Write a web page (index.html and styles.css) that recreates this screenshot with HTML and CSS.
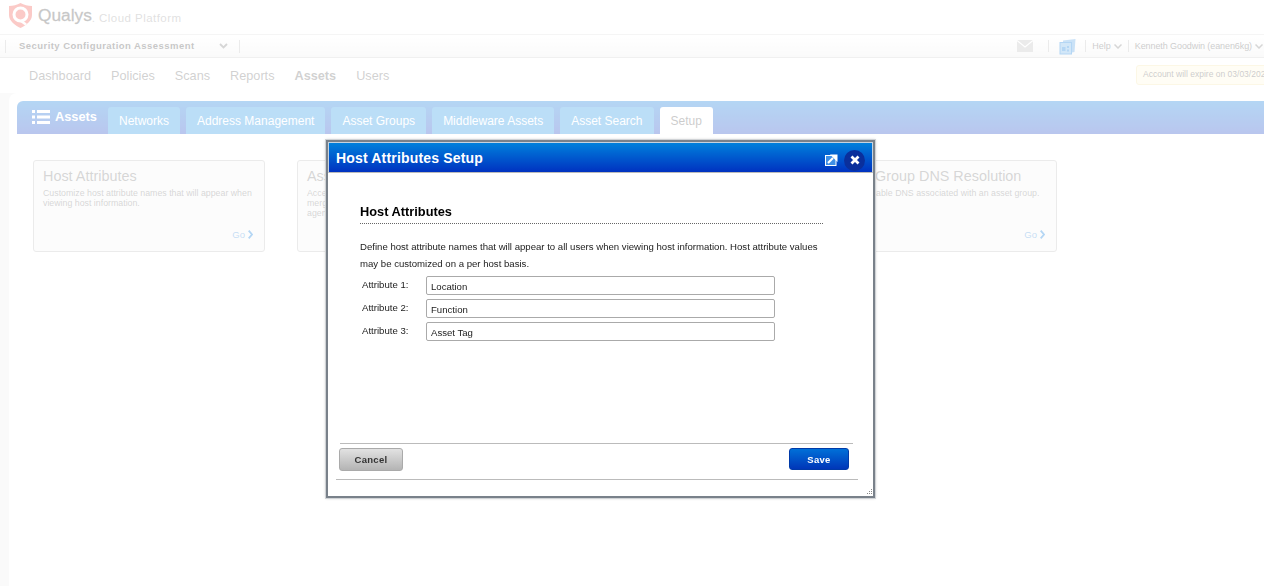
FILE: index.html
```html
<!DOCTYPE html>
<html>
<head>
	<title>Host Attributes Setup</title>
	<link rel="stylesheet" href="styles.css">
</head>
<body>
	<div class="page">
		<div class="logo-bar">
			<svg class="logo-mark" width="23" height="25" viewBox="0 0 23 25">
				<path d="M11.500 0 C15 2 19 3 23 3 V12 C23 18 17 22.500 11.500 25 C6 22.500 0 18 0 12 V3 C4 3 8 2 11.500 0 Z" fill="#f04e45"/>
				<circle cx="11.500" cy="11.500" r="6.500" fill="none" stroke="#fff" stroke-width="3"/>
				<path d="M12 18 L17 21.500" stroke="#fff" stroke-width="2.500"/>
			</svg>
			<span class="logo-name">Qualys</span>
			<span class="logo-sub">. Cloud Platform</span>
		</div>

		<div class="module-bar">
			<div class="module-select">
				<span>Security Configuration Assessment</span>
				<svg width="9" height="6" viewBox="0 0 9 6"><path d="M1 1 L4.500 4.500 L8 1" fill="none" stroke="#777" stroke-width="1.800"/></svg>
			</div>
			<div class="user-tools">
				<svg class="tool-mail" width="16" height="12" viewBox="0 0 16 12">
					<rect width="16" height="12" fill="#bbb"/>
					<path d="M0 0.500 L8 7 L16 0.500" fill="none" stroke="#fff" stroke-width="1.200"/>
				</svg>
				<div class="tool-stack">
					<svg width="17" height="17" viewBox="0 0 17 17">
						<path d="M4 2.500 L16.500 1 L15.500 14 L13 14.500 V4 L4 4 Z" fill="#0576da" opacity="0.700"/>
						<rect x="1" y="4.500" width="11.500" height="11.500" fill="#6aaee8" stroke="#0576da"/>
						<rect x="3" y="9" width="3.500" height="4" fill="#0576da"/>
						<rect x="8" y="8" width="2" height="2" fill="#0576da"/>
						<rect x="8" y="11.500" width="2" height="2" fill="#0576da"/>
					</svg>
				</div>
				<div class="tool-link tool-help">
					<span>Help</span>
					<svg width="8" height="5" viewBox="0 0 8 5"><path d="M0.500 0.500 L4 4 L7.500 0.500" fill="none" stroke="#777" stroke-width="1.500"/></svg>
				</div>
				<div class="tool-link tool-user">
					<span>Kenneth Goodwin (eanen6kg)</span>
					<svg width="8" height="5" viewBox="0 0 8 5"><path d="M0.500 0.500 L4 4 L7.500 0.500" fill="none" stroke="#777" stroke-width="1.500"/></svg>
				</div>
			</div>
		</div>

		<div class="nav-bar">
			<a>Dashboard</a>
			<a>Policies</a>
			<a>Scans</a>
			<a>Reports</a>
			<a class="nav-active">Assets</a>
			<a>Users</a>
			<div class="expire-note">Account will expire on 03/03/2024</div>
		</div>

		<div class="panel">
			<div class="tab-bar">
				<div class="tab-title">
					<svg width="18" height="14" viewBox="0 0 18 14">
						<path d="M0 0h3v3h-3z M5 0h13v3h-13z M0 5.500h3v3h-3z M5 5.500h13v3h-13z M0 11h3v3h-3z M5 11h13v3h-13z" fill="#fff"/>
					</svg>
					<span>Assets</span>
				</div>
				<a class="tab">Networks</a>
				<a class="tab">Address Management</a>
				<a class="tab">Asset Groups</a>
				<a class="tab">Middleware Assets</a>
				<a class="tab">Asset Search</a>
				<a class="tab tab-active">Setup</a>
			</div>

			<div class="cards">
				<div class="card">
					<h3>Host Attributes</h3>
					<p>Customize host attribute names that will appear when viewing host information.</p>
					<div class="card-go">Go <svg width="5" height="9" viewBox="0 0 5 9"><path d="M0.700 0.700 L4 4.500 L0.700 8.300" fill="none" stroke="#0576da" stroke-width="1.800"/></svg></div>
				</div>
				<div class="card">
					<h3>Asset Merge</h3>
					<p>Accept rules used to<br>merge host records from<br>agents and scanners.</p>
					<div class="card-go">Go <svg width="5" height="9" viewBox="0 0 5 9"><path d="M0.700 0.700 L4 4.500 L0.700 8.300" fill="none" stroke="#0576da" stroke-width="1.800"/></svg></div>
				</div>
				<div class="card">
					<h3>Asset Tagging</h3>
					<p>Manage tags applied to assets.</p>
					<div class="card-go">Go <svg width="5" height="9" viewBox="0 0 5 9"><path d="M0.700 0.700 L4 4.500 L0.700 8.300" fill="none" stroke="#0576da" stroke-width="1.800"/></svg></div>
				</div>
				<div class="card">
					<h3>Asset Group DNS Resolution</h3>
					<p>Enable/disable DNS associated with an asset group.</p>
					<div class="card-go">Go <svg width="5" height="9" viewBox="0 0 5 9"><path d="M0.700 0.700 L4 4.500 L0.700 8.300" fill="none" stroke="#0576da" stroke-width="1.800"/></svg></div>
				</div>
			</div>
		</div>
	</div>

	<div class="page-mask"></div>

	<div class="dialog">
		<div class="dialog-title">
			<span>Host Attributes Setup</span>
			<svg class="dialog-popout" width="13" height="12" viewBox="0 0 13 12">
				<rect x="0.500" y="1.500" width="10.500" height="10" fill="#3f8fe6" stroke="#fff"/>
				<path d="M3 9 L8 4" stroke="#fff" stroke-width="2"/>
				<path d="M5 0.500 H12.500 V8 L5 0.500 Z" fill="#fff"/>
			</svg>
			<div class="dialog-close">
				<svg width="10" height="10" viewBox="0 0 10 10"><path d="M1.500 1.500 L8.500 8.500 M8.500 1.500 L1.500 8.500" stroke="#fff" stroke-width="2.800"/></svg>
			</div>
		</div>

		<div class="dialog-body">
			<h2>Host Attributes</h2>
			<p>Define host attribute names that will appear to all users when viewing host information. Host attribute values may be customized on a per host basis.</p>
			<div class="attr-row">
				<label>Attribute 1:</label>
				<input type="text" value="Location">
			</div>
			<div class="attr-row">
				<label>Attribute 2:</label>
				<input type="text" value="Function">
			</div>
			<div class="attr-row">
				<label>Attribute 3:</label>
				<input type="text" value="Asset Tag">
			</div>
		</div>

		<div class="dialog-buttons">
			<button type="button" class="btn-cancel">Cancel</button>
			<button type="button" class="btn-save">Save</button>
		</div>
		<div class="dialog-end">
			<svg class="dialog-grip" width="6" height="6" viewBox="0 0 6 6"><path d="M5 0h1v1h-1z M3 2h1v1h-1z M5 2h1v1h-1z M1 4h1v1h-1z M3 4h1v1h-1z M5 4h1v1h-1z" fill="#888"/></svg>
		</div>
	</div>
</body>
</html>
```

FILE: styles.css
```css
html, body {
	margin: 0;
	height: 100%;
	overflow: hidden;
}

body {
	background: #eee;
	font-family: "Liberation Sans", Arial, sans-serif;
	color: #333;
}

.page {
	width: 1300px;
	height: 586px;
	display: flex;
	flex-direction: column;
}

.logo-bar {
	height: 34px;
	box-sizing: border-box;
	background: #fff;
	display: flex;
	align-items: center;
	padding-left: 9px;
}

.logo-mark {
	margin-right: 6px;
	margin-top: -4px;
}

.logo-name {
	font-size: 17.300px;
	color: #444;
	-webkit-text-stroke: 0.300px #444;
	margin-top: -3px;
}

.logo-sub {
	font-size: 11.500px;
	color: #999;
	letter-spacing: 0.450px;
	margin-top: 1px;
}

.module-bar {
	height: 24px;
	box-sizing: border-box;
	background: linear-gradient(#fff, #eee);
	border-top: 1px solid #ddd;
	border-bottom: 1px solid #ccc;
	display: flex;
	align-items: center;
	justify-content: space-between;
	padding: 0 0 0 5px;
}

.module-select {
	width: 235px;
	height: 13px;
	box-sizing: border-box;
	border-left: 1px solid #bbb;
	border-right: 1px solid #bbb;
	display: flex;
	align-items: center;
	justify-content: space-between;
	padding: 0 11px 0 13px;
	font-size: 9.500px;
	font-weight: bold;
	letter-spacing: 0.450px;
	color: #444;
}

.module-select span {
	margin-top: -2px;
}

.user-tools {
	display: flex;
	align-items: center;
	height: 100%;
	font-size: 9px;
	color: #555;
	padding-right: 37px;
}

.tool-mail {
	margin-right: 15px;
}

.tool-stack {
	width: 38px;
	height: 12px;
	box-sizing: border-box;
	display: flex;
	align-items: center;
	justify-content: center;
	border-left: 1px solid #bbb;
	border-right: 1px solid #bbb;
}

.tool-link {
	display: flex;
	align-items: center;
	gap: 3px;
	height: 12px;
	padding: 0 0 0 6px;
}

.tool-help {
	padding-right: 6px;
	border-right: 1px solid #bbb;
}

.tool-user span {
	letter-spacing: -0.090px;
}

.nav-bar {
	height: 35px;
	box-sizing: border-box;
	background: #fff;
	display: flex;
	align-items: center;
	gap: 20px;
	padding: 0 0 0 29px;
	font-size: 12.700px;
	color: #666;
}

.nav-active {
	font-weight: bold;
}

.expire-note {
	margin-left: auto;
	width: 164px;
	height: 20px;
	box-sizing: border-box;
	margin-top: -2px;
	padding-left: 6px;
	line-height: 16px;
	font-size: 8.500px;
	color: #555;
	background: #fff8dc;
	border: 1px solid #f3e3a8;
	border-radius: 3px;
}

.panel {
	flex: 1;
	margin-left: 9px;
	padding: 8px 0 0 8px;
	background: #fff;
	border-radius: 8px 0 0 0;
}

.tab-bar {
	height: 33px;
	background: linear-gradient(#0576da, #1641c6);
	border-radius: 6px 0 0 0;
	display: flex;
	align-items: flex-end;
	gap: 6px;
	padding-left: 15px;
}

.tab-title {
	width: 70px;
	height: 100%;
	box-sizing: border-box;
	display: flex;
	gap: 5px;
	padding-top: 8px;
	font-size: 12.800px;
	font-weight: bold;
	color: #fff;
}

.tab-title svg {
	margin-top: 1px;
}

.tab {
	height: 27px;
	box-sizing: border-box;
	padding: 7px 11px 0;
	background: #1d8fe3;
	border-radius: 3px 3px 0 0;
	font-size: 12px;
	color: #fff;
}

.tab-active {
	background: #fff;
	color: #555;
}

.cards {
	display: flex;
	gap: 32px;
	padding: 26px 0 0 16px;
}

.card {
	width: 232px;
	height: 92px;
	box-sizing: border-box;
	padding: 7px 9px 0;
	background: #f6f6f6;
	border: 1px solid #bbb;
	border-radius: 3px;
	position: relative;
}

.card h3 {
	margin: 0;
	font-size: 14.400px;
	font-weight: normal;
	line-height: 17px;
	color: #777;
	white-space: nowrap;
}

.card p {
	margin: 3px 0 0;
	font-size: 8.800px;
	line-height: 10px;
	color: #777;
}

.card-go {
	position: absolute;
	right: 11px;
	bottom: 11px;
	display: flex;
	align-items: center;
	gap: 3px;
	font-size: 9.500px;
	color: #3d8ed8;
}

.page-mask {
	position: fixed;
	inset: 0;
	background: rgba(255, 255, 255, 0.7);
}

.dialog {
	position: absolute;
	left: 326px;
	top: 140px;
	width: 549px;
	height: 358px;
	box-sizing: border-box;
	border: 2px solid #79818a;
	outline: 1px solid #d0d3d6;
	background: #fff;
	display: flex;
	flex-direction: column;
	box-shadow: 0 0 3px rgba(0, 0, 0, 0.25);
}

.dialog-title {
	height: 31px;
	box-sizing: border-box;
	border: 1px solid #c6d3e0;
	border-bottom-color: #bbb;
	background: linear-gradient(#0080dc, #0032c0);
	display: flex;
	align-items: center;
	padding: 0 7px;
	font-size: 14px;
	font-weight: bold;
	letter-spacing: 0.170px;
	color: #fff;
}

.dialog-title span {
	flex: 1;
}

.dialog-popout {
	margin: 4px 6px 0 0;
}

.dialog-close {
	width: 21px;
	height: 21px;
	margin-top: 5px;
	border-radius: 50%;
	background: #0a2f9c;
	display: flex;
	align-items: center;
	justify-content: center;
}

.dialog-body {
	flex: 1;
	padding: 31px 50px 0 32px;
}

.dialog-body h2 {
	margin: 0;
	height: 19px;
	border-bottom: 1px dotted #666;
	font-size: 12.800px;
	font-weight: bold;
	line-height: 16px;
	color: #000;
}

.dialog-body p {
	margin: 14px 0 4px;
	font-size: 9.600px;
	line-height: 17px;
	color: #222;
}

.attr-row {
	display: flex;
	align-items: flex-start;
	height: 23px;
	font-size: 9.600px;
}

.attr-row label {
	width: 66px;
	padding: 3px 0 0 2px;
	box-sizing: border-box;
	color: #222;
}

.attr-row input {
	width: 349px;
	height: 19px;
	box-sizing: border-box;
	margin: 0;
	padding: 1px 4px 0;
	border: 1px solid #aaa;
	border-radius: 2px;
	font-family: "Liberation Sans", Arial, sans-serif;
	font-size: 9.600px;
	color: #222;
}

.dialog-buttons {
	height: 36px;
	box-sizing: border-box;
	margin: 0 20px 0 12px;
	border-top: 1px solid #bbb;
	display: flex;
	justify-content: space-between;
	align-items: flex-start;
	padding: 4px 4px 0 0;
}

.dialog-end {
	height: 17px;
	box-sizing: border-box;
	margin: 0 15px 0 8px;
	border-top: 1px solid #bbb;
}

.dialog-grip {
	position: absolute;
	right: 1px;
	bottom: 1px;
}

.btn-cancel, .btn-save {
	height: 23px;
	font-family: "Liberation Sans", Arial, sans-serif;
	font-size: 9.500px;
	font-weight: bold;
	letter-spacing: 0.300px;
	border-radius: 3px;
}

.btn-cancel {
	width: 64px;
	margin-left: -1px;
	color: #333;
	background: linear-gradient(#e2e2e2, #b4b4b4);
	border: 1px solid #aaa;
}

.btn-save {
	width: 60px;
	height: 22px;
	color: #fff;
	background: linear-gradient(#0070d8, #0036b8);
	border: 1px solid #003aa8;
}
```
